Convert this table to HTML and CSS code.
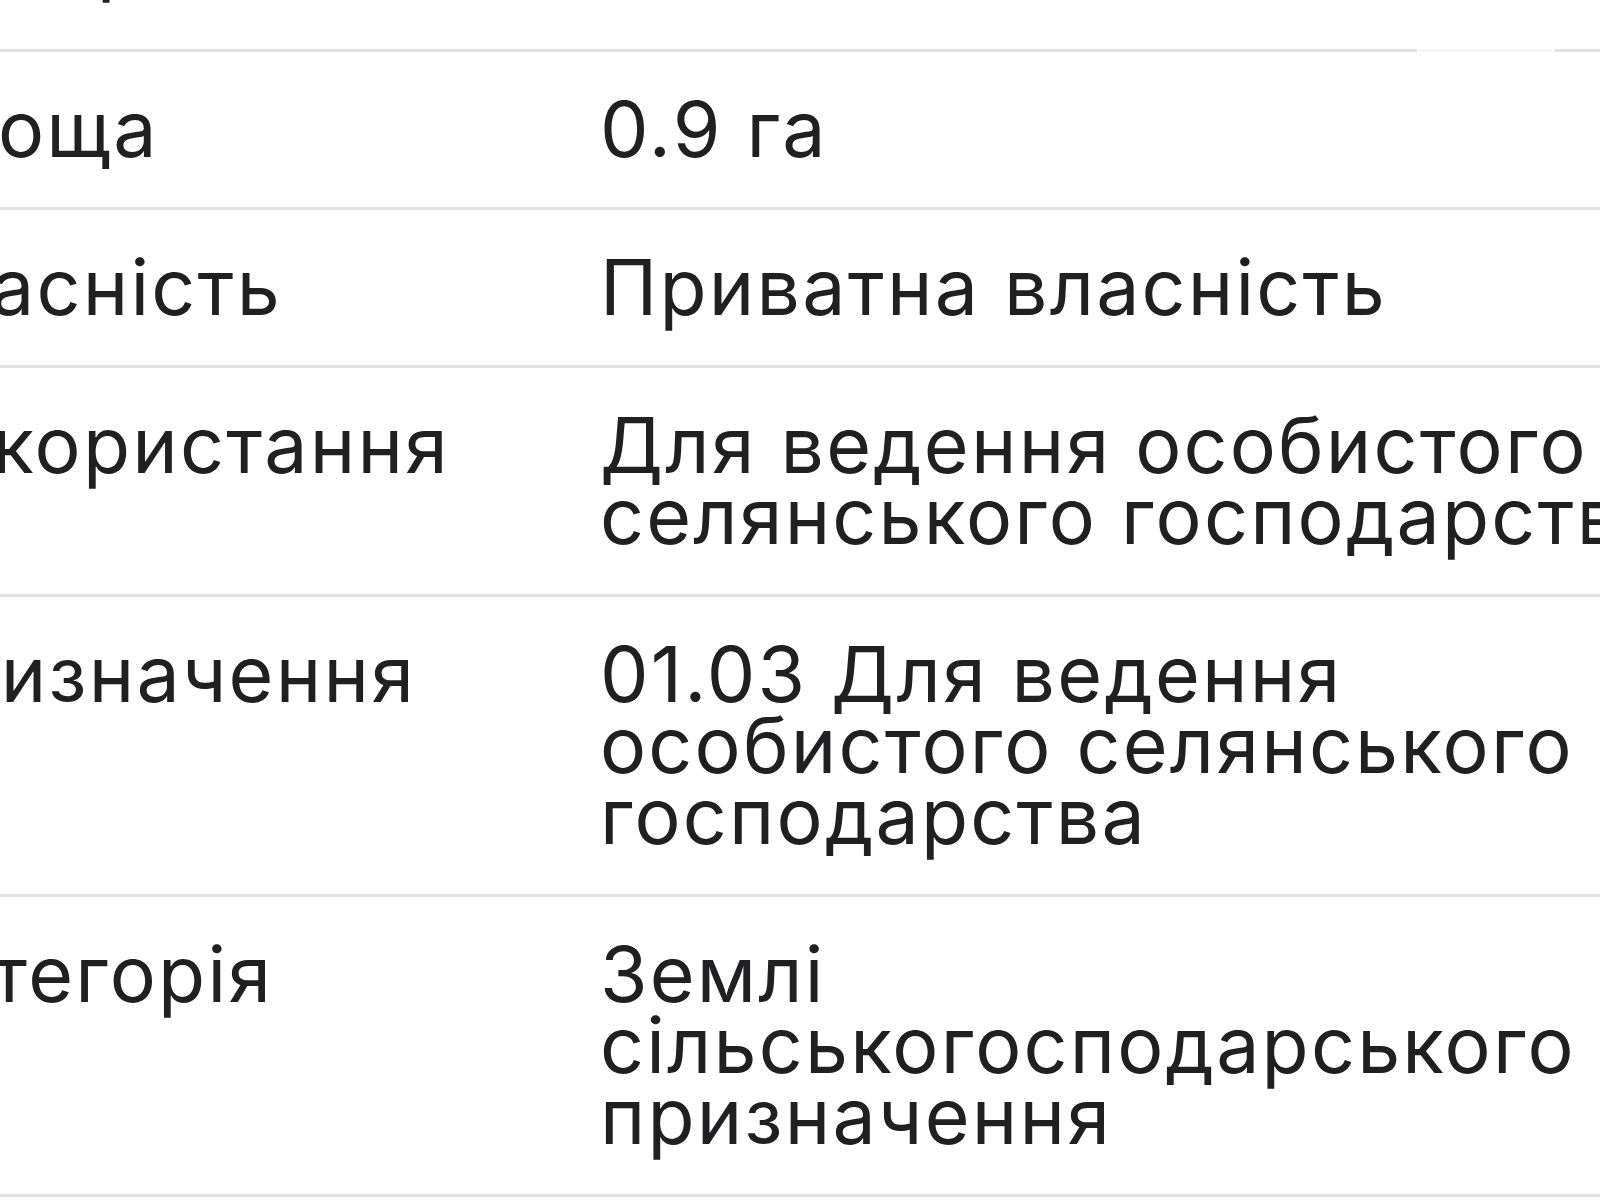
FILE: index.html
```html
<!DOCTYPE html>
<html lang="uk">
<head>
<meta charset="utf-8">
<title>Земельна ділянка</title>
<link rel="stylesheet" href="styles.css">
</head>
<body>
<div class="sheet">
  <div class="table">
    <div class="row row-cut">
      <div class="label">Кадастровий<br>номер</div>
      <div class="value"></div>
    </div>
    <div class="row">
      <div class="label">Площа</div>
      <div class="value">0.9 га</div>
    </div>
    <div class="row">
      <div class="label">Власність</div>
      <div class="value">Приватна власність</div>
    </div>
    <div class="row">
      <div class="label">Використання</div>
      <div class="value">Для ведення особистого<br>селянського господарства</div>
    </div>
    <div class="row">
      <div class="label">Призначення</div>
      <div class="value">01.03 Для ведення<br>особистого селянського<br>господарства</div>
    </div>
    <div class="row">
      <div class="label">Категорія</div>
      <div class="value">Землі<br>сільськогосподарського<br>призначення</div>
    </div>
  </div>
  <div class="scroll-gap"></div>
</div>
</body>
</html>
```

FILE: styles.css
```css
html, body {
  margin: 0;
  padding: 0;
  background: #ffffff;
  overflow: hidden;
  width: 1600px;
  height: 1200px;
}

.sheet {
  position: relative;
  width: 1600px;
  height: 1200px;
  overflow: hidden;
}

.table {
  margin-left: -108px;
  margin-top: -189px;
  width: 1800px;
  font-family: "Inter", "Liberation Sans", sans-serif;
  font-size: 77px;
  line-height: 71px;
  color: #202022;
  letter-spacing: 2.2px;
}

.row {
  display: grid;
  grid-template-columns: 708px 1fr;
  padding: 42px 0;
  border-bottom: 3px solid #e1e2e5;
}

.row-cut {
  padding-bottom: 54px;
}

.label,
.value {
  white-space: nowrap;
}

.scroll-gap {
  position: absolute;
  left: 1417px;
  top: 49px;
  width: 138px;
  height: 3px;
  background: #f6f7f9;
}
```
